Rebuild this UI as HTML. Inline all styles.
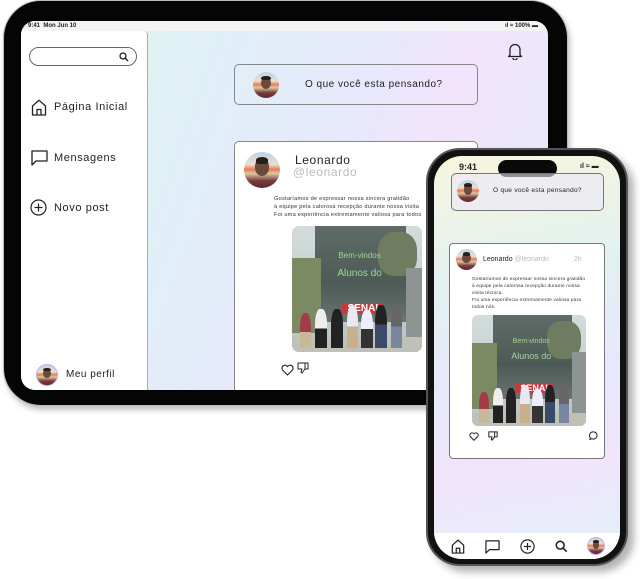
<!DOCTYPE html>
<html><head><meta charset="utf-8"><style>
*{box-sizing:border-box;margin:0;padding:0}
body{width:640px;height:579px;background:#fff;position:relative;overflow:hidden;font-family:"Liberation Sans",sans-serif;color:#222}
.abs{position:absolute;line-height:1.1}
.av{position:absolute;border-radius:50%;overflow:hidden;background:linear-gradient(180deg,#b9d3e6 0%,#e8e0d0 35%,#e87a5a 48%,#d9c9a0 60%,#7a3a3a 80%,#5a2a30 100%)}
.av::before{content:"";position:absolute;left:30%;top:18%;width:40%;height:48%;border-radius:50%;background:#6b4a3c}
.av::after{content:"";position:absolute;left:32%;top:14%;width:36%;height:18%;border-radius:50% 50% 30% 30%;background:#2a1e1a}
.photo{position:absolute;overflow:hidden;background:linear-gradient(180deg,#d3dcdc,#b8c3be)}
.photo div{position:absolute}
.ph-b{left:18%;top:0;width:70%;height:76%;background:linear-gradient(180deg,#5f6b68,#4e5a55 60%,#6a7470)}
.ph-t{left:0;top:25%;width:22%;height:60%;background:#7b8a63}
.ph-t2{left:66%;top:5%;width:30%;height:35%;background:#6f7c60;border-radius:40%}
.ph-p{left:88%;top:33%;width:12%;height:67%;background:#8e9394}
.ph-r{left:38%;top:61%;width:33%;height:9%;background:#c73a3e;color:#fff;font-weight:bold;text-align:center;overflow:hidden}
.ph-g{left:0;top:88%;width:100%;height:12%;background:#bfc0b8}
.ph-x{color:#9fd49b;text-align:center;width:60%;left:22%}
.pp{bottom:3%;width:9%;border-radius:40% 40% 0 0}
.icon{position:absolute}
</style></head><body>

<!-- Tablet -->
<div class="abs" style="left:3px;top:0;width:565px;height:406px;background:#050505;border-radius:38px;box-shadow:2px 4px 6px rgba(0,0,0,.25);border:1px solid #bbb"></div>
<div class="abs" style="left:21px;top:21px;width:527px;height:369px;border-radius:14px;overflow:hidden;background:linear-gradient(110deg,#eef6dc 0%,#dff1f6 25%,#e6e8fb 55%,#f1e3fb 70%,#e4eefc 100%)">
  <div class="abs" style="left:0;top:0;width:527px;height:10px;background:#f4f4f6;font-size:6px;font-weight:bold;padding:2px 0 0 7px">9:41 &nbsp;Mon Jun 10<span style="position:absolute;right:10px;top:2px">ıl ≈ 100% ▬</span></div>
  <!-- sidebar -->
  <div class="abs" style="left:0;top:10px;width:127px;height:359px;background:#fff;border-right:1px solid #aaa;border-radius:0 4px 0 0">
    <div class="abs" style="left:8px;top:16px;width:108px;height:19px;border:1px solid #666;border-radius:10px"></div>
    <svg class="icon" style="left:98px;top:21px" width="10" height="10" viewBox="0 0 10 10"><circle cx="4" cy="4" r="3" fill="none" stroke="#222" stroke-width="1.3"/><path d="M6 6l3 3" stroke="#222" stroke-width="1.4"/></svg>
    <svg class="icon" style="left:10px;top:68px" width="16" height="17" viewBox="0 0 16 17"><path d="M1.5 7L8 1.2 14.5 7V16H1.5Z M6 16V10.5H10V16" fill="none" stroke="#222" stroke-width="1.3" stroke-linejoin="round"/></svg>
    <div class="abs" style="left:33px;top:70px;font-size:11px;letter-spacing:.6px">Página Inicial</div>
    <svg class="icon" style="left:10px;top:119px" width="17" height="16" viewBox="0 0 17 16"><path d="M1 1H16V11H5L1 15Z" fill="none" stroke="#222" stroke-width="1.3" stroke-linejoin="round"/></svg>
    <div class="abs" style="left:33px;top:121px;font-size:11px;letter-spacing:.6px">Mensagens</div>
    <svg class="icon" style="left:9px;top:168px" width="17" height="17" viewBox="0 0 17 17"><circle cx="8.5" cy="8.5" r="7.5" fill="none" stroke="#222" stroke-width="1.2"/><path d="M8.5 4.5v8M4.5 8.5h8" stroke="#222" stroke-width="1.2"/></svg>
    <div class="abs" style="left:33px;top:171px;font-size:11px;letter-spacing:.6px">Novo post</div>
    <div class="av" style="left:15px;top:333px;width:22px;height:22px;border:1px solid #caa8d8"></div>
    <div class="abs" style="left:45px;top:338px;font-size:10px;letter-spacing:.5px">Meu perfil</div>
  </div>
  <svg class="icon" style="left:486px;top:21px" width="16" height="18" viewBox="0 0 16 18"><path d="M3 13V7.5A5 5 0 0 1 13 7.5V13L14.5 14.5H1.5Z M6 16A2 2 0 0 0 10 16" fill="none" stroke="#222" stroke-width="1.3" stroke-linejoin="round"/></svg>
  <!-- compose -->
  <div class="abs" style="left:213px;top:43px;width:244px;height:41px;border:1px solid #888;border-radius:5px"></div>
  <div class="av" style="left:232px;top:51px;width:26px;height:26px"></div>
  <div class="abs" style="left:284px;top:58px;font-size:10px;letter-spacing:.5px">O que você esta pensando?</div>
  <!-- post -->
  <div class="abs" style="left:213px;top:120px;width:244px;height:260px;background:#fff;border:1px solid #888;border-radius:5px">
    <div class="av" style="left:9px;top:10px;width:36px;height:36px"></div>
    <div class="abs" style="left:60px;top:12px;font-size:12px;line-height:1;letter-spacing:.6px">Leonardo</div>
    <div class="abs" style="left:58px;top:24px;font-size:12px;line-height:1;color:#bbb;letter-spacing:.6px">@leonardo</div>
    <div class="abs" style="left:39px;top:53px;font-size:5.6px;line-height:8px;white-space:nowrap;color:#333;letter-spacing:.25px">Gostaríamos de expressar nossa sincera gratidão<br>à equipe pela calorosa recepção durante nossa visita<br>Foi uma experiência extremamente valiosa para todos</div>
    <div class="photo" style="left:57px;top:84px;width:130px;height:126px;border-radius:7px">
      <div class="ph-b"></div><div class="ph-t2"></div><div class="ph-t"></div><div class="ph-p"></div>
      <div class="ph-x" style="top:21%;font-size:8px">Bem-vindos</div>
      <div class="ph-x" style="top:33%;font-size:10px">Alunos do</div>
      <div class="ph-r" style="font-size:10px;line-height:11px">SENAI</div>
      <div class="ph-g"></div>
      <div class="pp" style="left:6%;height:28%;background:linear-gradient(#a33b48 55%,#c8b89a 55%)"></div>
      <div class="pp" style="left:18%;height:31%;background:linear-gradient(#eee 50%,#222 50%)"></div>
      <div class="pp" style="left:30%;height:31%;background:#222"></div>
      <div class="pp" style="left:42%;height:34%;background:linear-gradient(#e8e8f0 50%,#c7b08a 50%)"></div>
      <div class="pp" style="left:53%;height:30%;background:linear-gradient(#eef 50%,#333 50%)"></div>
      <div class="pp" style="left:64%;height:34%;background:linear-gradient(#222 45%,#3b4a6b 45%)"></div>
      <div class="pp" style="left:76%;height:34%;background:linear-gradient(#666 50%,#7a86a0 50%)"></div>
    </div>
    <svg class="icon" style="left:46px;top:222px" width="13" height="12" viewBox="0 0 13 12"><path d="M6.5 11L1.5 6A2.8 2.8 0 0 1 6.5 2.5 2.8 2.8 0 0 1 11.5 6Z" fill="none" stroke="#222" stroke-width="1.1"/></svg>
    <svg class="icon" style="left:62px;top:220px" width="12" height="12" viewBox="0 0 12 12"><path d="M1 1H8V7L5 11 4 10 5 7H1Z M8 1H11V7H8" fill="none" stroke="#222" stroke-width="1" stroke-linejoin="round"/></svg>
  </div>
</div>

<!-- Phone -->
<div class="abs" style="left:426px;top:148px;width:202px;height:418px;background:#111;border-radius:34px;border:2px solid #555;box-shadow:6px 6px 8px rgba(0,0,0,.3)"></div>
<div class="abs" style="left:434px;top:156px;width:186px;height:403px;border-radius:28px;overflow:hidden;background:linear-gradient(170deg,#f7f6dd 0%,#e3f1f1 30%,#e6e8fb 55%,#f1e4fb 75%,#e2f1fb 100%)">
  <div class="abs" style="left:64px;top:4px;width:59px;height:17px;background:#0a0a0a;border-radius:9px"></div>
  <div class="abs" style="left:25px;top:7px;font-size:9px;font-weight:bold">9:41</div>
  <div class="abs" style="left:146px;top:7px;font-size:7px;font-weight:bold">ıl ≈ ▬</div>
  <div class="abs" style="left:17px;top:17px;width:153px;height:38px;border:1px solid #777;border-radius:5px;background:rgba(235,230,248,.6)"></div>
  <div class="av" style="left:23px;top:24px;width:22px;height:22px"></div>
  <div class="abs" style="left:59px;top:31px;font-size:6.5px;letter-spacing:.3px">O que você esta pensando?</div>
  <div class="abs" style="left:15px;top:87px;width:156px;height:216px;background:#fff;border:1px solid #777;border-radius:4px">
    <div class="av" style="left:6px;top:5px;width:21px;height:21px"></div>
    <div class="abs" style="left:33px;top:12px;font-size:7px">Leonardo <span style="color:#bbb">@leonardo</span></div>
    <div class="abs" style="left:124px;top:12px;font-size:7px;color:#bbb">2h</div>
    <div class="abs" style="left:22px;top:32px;font-size:4.8px;line-height:7px;white-space:nowrap;color:#333;letter-spacing:.15px">Gostaríamos de expressar nossa sincera gratidão<br>à equipe pela calorosa recepção durante nossa<br>visita técnica.<br>Foi uma experiência extremamente valiosa para<br>todos nós.</div>
    <div class="photo" style="left:22px;top:71px;width:114px;height:111px;border-radius:6px">
      <div class="ph-b"></div><div class="ph-t2"></div><div class="ph-t"></div><div class="ph-p"></div>
      <div class="ph-x" style="top:21%;font-size:7px">Bem-vindos</div>
      <div class="ph-x" style="top:33%;font-size:9px">Alunos do</div>
      <div class="ph-r" style="font-size:9px;line-height:10px">SENAI</div>
      <div class="ph-g"></div>
      <div class="pp" style="left:6%;height:28%;background:linear-gradient(#a33b48 55%,#c8b89a 55%)"></div>
      <div class="pp" style="left:18%;height:31%;background:linear-gradient(#eee 50%,#222 50%)"></div>
      <div class="pp" style="left:30%;height:31%;background:#222"></div>
      <div class="pp" style="left:42%;height:34%;background:linear-gradient(#e8e8f0 50%,#c7b08a 50%)"></div>
      <div class="pp" style="left:53%;height:30%;background:linear-gradient(#eef 50%,#333 50%)"></div>
      <div class="pp" style="left:64%;height:34%;background:linear-gradient(#222 45%,#3b4a6b 45%)"></div>
      <div class="pp" style="left:76%;height:34%;background:linear-gradient(#666 50%,#7a86a0 50%)"></div>
    </div>
    <svg class="icon" style="left:19px;top:188px" width="10" height="9" viewBox="0 0 13 12"><path d="M6.5 11L1.5 6A2.8 2.8 0 0 1 6.5 2.5 2.8 2.8 0 0 1 11.5 6Z" fill="none" stroke="#222" stroke-width="1.3"/></svg>
    <svg class="icon" style="left:38px;top:187px" width="10" height="10" viewBox="0 0 12 12"><path d="M1 1H8V7L5 11 4 10 5 7H1Z M8 1H11V7H8" fill="none" stroke="#222" stroke-width="1.2" stroke-linejoin="round"/></svg>
    <svg class="icon" style="left:139px;top:187px" width="9" height="9" viewBox="0 0 10 10"><path d="M5 1A4 4 0 1 1 3 8.5L1 9.5 1.5 7.5A4 4 0 0 1 5 1Z" fill="none" stroke="#222" stroke-width="1.1"/></svg>
  </div>
  <div class="abs" style="left:0;top:377px;width:186px;height:26px;background:#fff"></div>
  <svg class="icon" style="left:17px;top:383px" width="14" height="15" viewBox="0 0 16 17"><path d="M1.5 7L8 1.2 14.5 7V16H1.5Z M6 16V10.5H10V16" fill="none" stroke="#222" stroke-width="1.4" stroke-linejoin="round"/></svg>
  <svg class="icon" style="left:51px;top:384px" width="15" height="14" viewBox="0 0 17 16"><path d="M1 1H16V11H5L1 15Z" fill="none" stroke="#222" stroke-width="1.4" stroke-linejoin="round"/></svg>
  <svg class="icon" style="left:86px;top:383px" width="15" height="15" viewBox="0 0 17 17"><circle cx="8.5" cy="8.5" r="7.5" fill="none" stroke="#222" stroke-width="1.3"/><path d="M8.5 4.5v8M4.5 8.5h8" stroke="#222" stroke-width="1.3"/></svg>
  <svg class="icon" style="left:121px;top:384px" width="13" height="13" viewBox="0 0 10 10"><circle cx="4" cy="4" r="3" fill="none" stroke="#222" stroke-width="1.2"/><path d="M6 6l3 3" stroke="#222" stroke-width="1.3"/></svg>
  <div class="av" style="left:153px;top:381px;width:18px;height:18px;border:1px solid #d6a8e0"></div>
</div>
</body></html>
